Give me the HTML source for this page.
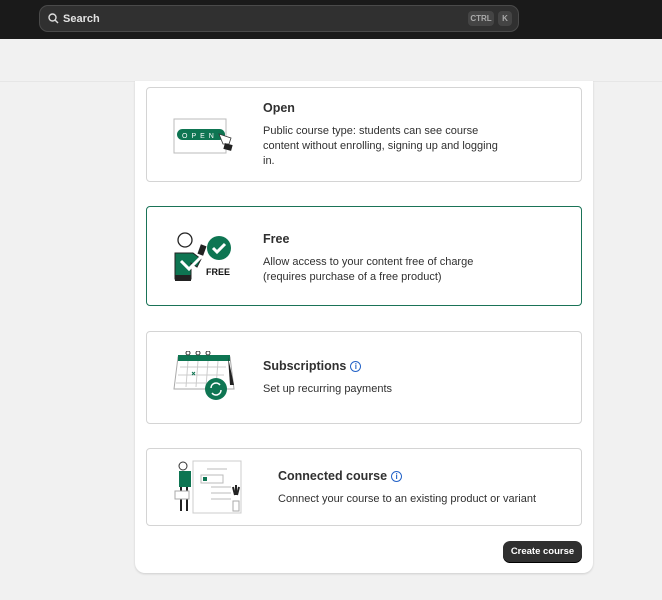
<!DOCTYPE html>
<html><head><style>
*{box-sizing:border-box;margin:0;padding:0}
body{width:662px;height:600px;background:#f1f1f1;font-family:"Liberation Sans",sans-serif;position:relative;overflow:hidden;color:#303030}
.top{position:absolute;left:0;top:0;width:662px;height:39px;background:#1a1a1a}
.search{position:absolute;left:39px;top:5px;width:480px;height:27px;background:#303030;border:1px solid #4a4a4a;border-radius:9px;color:#e3e3e3;font-size:11px;font-weight:bold}
.search span.t{position:absolute;left:23px;top:7px}
.kbd{position:absolute;top:5px;height:15px;background:#444;border-radius:4px;color:#aaa;font-size:8px;line-height:15px;text-align:center}
.line{position:absolute;left:0;top:81px;width:662px;height:1px;background:#e6e6e6}
.panel{position:absolute;left:135px;top:81px;width:458px;height:492px;background:#fff;border-radius:0 0 10px 10px;box-shadow:0 1px 2px rgba(0,0,0,.15)}
.card{position:absolute;left:146px;width:436px;background:#fff;border:1px solid #d4d4d4;border-radius:4px}
.card h3{position:absolute;font-size:12.5px;font-weight:bold;color:#303030}
.card p{position:absolute;font-size:11px;line-height:15px;color:#303030}
.info{display:inline-block;width:11px;height:11px;border:1.3px solid #2463c7;border-radius:50%;color:#2463c7;font-size:8px;line-height:9px;text-align:center;vertical-align:1px;margin-left:4px;font-weight:bold}
.btn{position:absolute;left:503px;top:541px;width:79px;height:21px;background:#303030;border-radius:7px;color:#fff;font-size:9.5px;font-weight:bold;text-align:center;line-height:21px;box-shadow:0 1px 0 #000}
</style></head><body>
<div class="top"><div class="search">
<svg style="position:absolute;left:8px;top:7px" width="11" height="11" viewBox="0 0 11 11"><circle cx="4.5" cy="4.5" r="3.5" stroke="#ddd" stroke-width="1.4" fill="none"/><path d="M7 7l3 3" stroke="#ddd" stroke-width="1.4"/></svg>
<span class="t">Search</span>
<div class="kbd" style="left:428px;width:26px">CTRL</div><div class="kbd" style="left:458px;width:14px">K</div>
</div></div>
<div class="line"></div>
<div class="panel"></div>

<div class="card" style="top:87px;height:95px">
<svg style="position:absolute;left:26px;top:30px" width="64" height="38" viewBox="0 0 64 38"><rect x="1" y="1" width="52" height="34" fill="#fff" stroke="#bbb"/><rect x="4" y="11" width="48" height="11" rx="5.5" fill="#0e7552"/><text x="9" y="20" font-size="7" fill="#fff" font-family="Liberation Sans" letter-spacing="4">OPEN</text><path d="M46 16l4 10 6 0 2-6z" fill="#fff" stroke="#333" stroke-width=".8"/><rect x="51" y="26" width="8" height="6" fill="#222" transform="rotate(15 55 29)"/></svg>
<h3 style="left:116px;top:13px">Open</h3>
<p style="left:116px;top:36px;width:245px">Public course type: students can see course content without enrolling, signing up and logging in.</p>
</div>

<div class="card" style="top:206px;height:100px;border-color:#1a7357">
<svg style="position:absolute;left:24px;top:24px" width="64" height="54" viewBox="0 0 64 54"><circle cx="14" cy="9" r="7" fill="#fff" stroke="#222" stroke-width="1.3"/><path d="M4 22h18l8 6-4 8-6-4v16H4z" fill="#0e7552" stroke="#222"/><path d="M4 44h16v6H4z" fill="#222"/><path d="M10 30l8 8 12-12" stroke="#fff" stroke-width="3" fill="none"/><rect x="28" y="14" width="6" height="10" fill="#222" transform="rotate(20 31 19)"/><circle cx="48" cy="17" r="12" fill="#0e7552"/><path d="M42 17l4 4 8-8" stroke="#fff" stroke-width="3" fill="none"/><text x="35" y="44" font-size="9" font-weight="bold" fill="#111" font-family="Liberation Sans">FREE</text></svg>
<h3 style="left:116px;top:25px">Free</h3>
<p style="left:116px;top:48px;width:230px">Allow access to your content free of charge (requires purchase of a free product)</p>
</div>

<div class="card" style="top:331px;height:93px">
<svg style="position:absolute;left:25px;top:19px" width="64" height="52" viewBox="0 0 64 52"><path d="M6 6h52l4 32H2z" fill="#fff" stroke="#aaa"/><rect x="6" y="4" width="52" height="6" fill="#0e7552"/><path d="M56 6l6 28h-4z" fill="#222"/><path d="M8 16h46M6 24h46M4 32h46M16 10l-2 26M26 10l-2 26M36 10l-2 26M46 10l-2 26" stroke="#ccc"/><circle cx="16" cy="2" r="2" fill="none" stroke="#333"/><circle cx="26" cy="2" r="2" fill="none" stroke="#333"/><circle cx="36" cy="2" r="2" fill="none" stroke="#333"/><path d="M20 21l3 3M23 21l-3 3" stroke="#0e7552"/><circle cx="44" cy="38" r="11" fill="#0e7552"/><path d="M39 37a5 5 0 0 1 9-3M49 39a5 5 0 0 1-9 3" stroke="#fff" stroke-width="1.5" fill="none"/></svg>
<h3 style="left:116px;top:27px">Subscriptions<span class="info">i</span></h3>
<p style="left:116px;top:50px">Set up recurring payments</p>
</div>

<div class="card" style="top:448px;height:78px">
<svg style="position:absolute;left:20px;top:10px" width="80" height="58" viewBox="0 0 80 58"><rect x="26" y="2" width="48" height="52" fill="#fff" stroke="#ccc"/><rect x="34" y="16" width="22" height="8" fill="#fff" stroke="#bbb"/><rect x="36" y="18" width="4" height="4" fill="#0e7552"/><path d="M40 10h20M44 28h20M44 34h20M44 40h20" stroke="#ddd" stroke-width="2"/><path d="M12 12h12v16H12z" fill="#0e7552"/><circle cx="16" cy="7" r="4" fill="#fff" stroke="#333"/><path d="M14 28v24M20 28v24" stroke="#222" stroke-width="2"/><rect x="8" y="32" width="14" height="8" fill="#fff" stroke="#aaa"/><path d="M68 36l-2-8M70 36l2-8M69 36v-10" stroke="#222" stroke-width="2"/><rect x="66" y="42" width="6" height="10" fill="#fff" stroke="#aaa"/></svg>
<h3 style="left:131px;top:20px">Connected course<span class="info">i</span></h3>
<p style="left:131px;top:43px">Connect your course to an existing product or variant</p>
</div>

<div class="btn">Create course</div>
</body></html>
